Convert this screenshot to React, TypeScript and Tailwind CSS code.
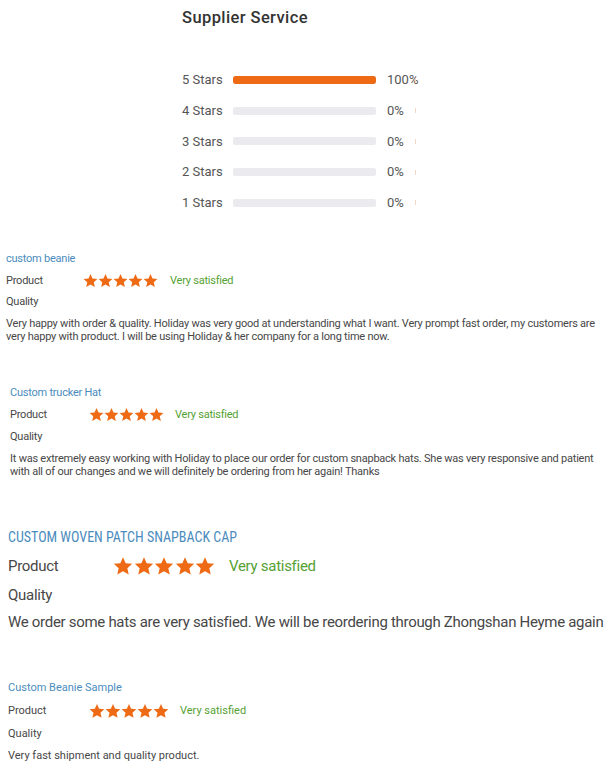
import React from "react";

function Stars({ size, gap }: { size: number; gap: number }) {
  return (
    <div className="flex" style={{ gap }}>
      {[0, 1, 2, 3, 4].map((i) => (
        <svg key={i} width={size} height={size} viewBox="0 0 24 24">
          <path
            d="M12 1.5l3.2 7.1 7.8.8-5.8 5.2 1.7 7.7L12 18.4l-6.9 3.9 1.7-7.7L1 9.4l7.8-.8z"
            fill="#ee6a14"
          />
        </svg>
      ))}
    </div>
  );
}

const rows = [
  { label: "5 Stars", pct: 100 },
  { label: "4 Stars", pct: 0 },
  { label: "3 Stars", pct: 0 },
  { label: "2 Stars", pct: 0 },
  { label: "1 Stars", pct: 0 },
];

export default function App() {
  return (
    <div
      className="w-[610px] h-[773px] bg-white overflow-hidden text-[#474747]"
      style={{ fontFamily: "Roboto, 'Liberation Sans', sans-serif" }}
    >
      {/* Supplier service */}
      <div className="pl-[182px] pt-[7px]">
        <div className="text-[16.5px] font-medium text-[#333] leading-[22px] tracking-[0.4px]">
          Supplier Service
        </div>
        <div className="mt-[41px] flex flex-col gap-[10.7px]">
          {rows.map((r) => (
            <div key={r.label} className="flex items-center h-[20px]">
              <div className="w-[51px] text-[13px] text-[#555]">{r.label}</div>
              <div className="w-[143px] h-[8px] rounded-[2px] bg-[#ebebef] overflow-hidden">
                <div className="h-full bg-[#ee6a14] rounded-[2px]" style={{ width: `${r.pct}%` }} />
              </div>
              <div className="w-[28px] ml-[11px] text-[13px] text-[#555]">{r.pct}%</div>
              <div className="w-[1px] h-[5px] bg-[#f3d6c4]" />
            </div>
          ))}
        </div>
      </div>

      {/* Review 1 */}
      <div className="pl-[6px] mt-[39px] text-[11px] tracking-[-0.23px]">
        <div className="text-[#4b8cbd] leading-[14px]">custom beanie</div>
        <div className="flex items-center mt-[8px] h-[14px]">
          <div className="w-[77px]">Product</div>
          <Stars size={15} gap={0} />
          <div className="ml-[12px] text-[#55a133]">Very satisfied</div>
        </div>
        <div className="mt-[7px] leading-[14px]">Quality</div>
        <div className="mt-[8px] leading-[13px] w-[600px]">
          Very happy with order &amp; quality. Holiday was very good at understanding what I want. Very prompt fast order, my customers are very happy with product. I will be using Holiday &amp; her company for a long time now.
        </div>
      </div>

      {/* Review 2 */}
      <div className="pl-[10px] mt-[43px] text-[11px] tracking-[-0.23px]">
        <div className="text-[#4b8cbd] leading-[14px]">Custom trucker Hat</div>
        <div className="flex items-center mt-[8px] h-[14px]">
          <div className="w-[79px]">Product</div>
          <Stars size={15} gap={0} />
          <div className="ml-[11px] text-[#55a133]">Very satisfied</div>
        </div>
        <div className="mt-[8px] leading-[14px]">Quality</div>
        <div className="mt-[8px] leading-[13px] w-[598px]">
          It was extremely easy working with Holiday to place our order for custom snapback hats. She was very responsive and patient with all of our changes and we will definitely be ordering from her again! Thanks
        </div>
      </div>

      {/* Review 3 */}
      <div className="pl-[8px] mt-[50px]">
        <div className="text-[#4b8cbd] text-[14px] leading-[18px] [font-stretch:86%]">CUSTOM WOVEN PATCH SNAPBACK CAP</div>
        <div className="flex items-center mt-[10px] h-[20px] text-[15px] tracking-[-0.28px]">
          <div className="w-[105px]">Product</div>
          <Stars size={20} gap={0.5} />
          <div className="ml-[14px] text-[#55a133]">Very satisfied</div>
        </div>
        <div className="mt-[9px] leading-[20px] text-[15px] tracking-[-0.28px]">Quality</div>
        <div className="mt-[7px] leading-[20px] text-[15px] tracking-[-0.3px] whitespace-nowrap">
          We order some hats are very satisfied. We will be reordering through Zhongshan Heyme again
        </div>
      </div>

      {/* Review 4 */}
      <div className="pl-[8px] mt-[49px] text-[11px]">
        <div className="text-[#4b8cbd] leading-[14px]">Custom Beanie Sample</div>
        <div className="flex items-center mt-[9px] h-[14px]">
          <div className="w-[81px]">Product</div>
          <Stars size={16} gap={0} />
          <div className="ml-[11px] text-[#55a133]">Very satisfied</div>
        </div>
        <div className="mt-[9px] leading-[14px]">Quality</div>
        <div className="mt-[8px] leading-[14px]">Very fast shipment and quality product.</div>
      </div>
    </div>
  );
}
